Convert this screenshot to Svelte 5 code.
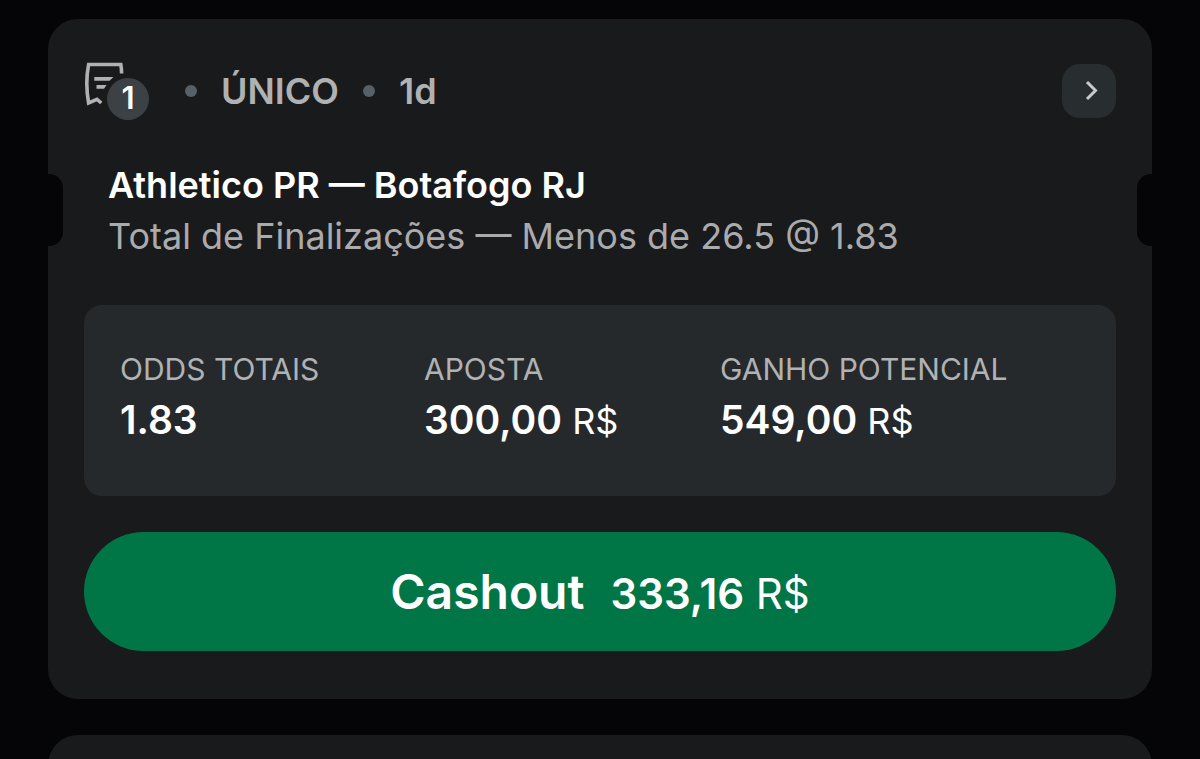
<script>
  const stats = [
    { label: 'ODDS TOTAIS', value: '1.83', currency: '' },
    { label: 'APOSTA', value: '300,00', currency: 'R$' },
    { label: 'GANHO POTENCIAL', value: '549,00', currency: 'R$' }
  ];
</script>

<main>
  <article class="card">
    <header>
      <div class="type">
        <svg width="42" height="48" viewBox="0 0 42 48" fill="none" stroke="#b0b1b3" stroke-width="3.6" aria-hidden="true">
          <path d="M37.600 12.500Q37.600 8 36.800 3.500H4.600Q1 22 4.600 42L13 38.300 17.300 42" />
          <path d="M10.300 16H29.500L25.500 19.700H10.300ZM12.500 24H22.500L20 27.700H12.500Z" fill="#b0b1b3" stroke="none" />
        </svg>
        <span class="count">1</span>
      </div>
      <i class="dot"></i>
      <span>ÚNICO</span>
      <i class="dot"></i>
      <span>1d</span>
      <button class="open" aria-label="Abrir aposta">
        <svg width="16" height="24" viewBox="0 0 16 24" fill="none" stroke="#c8cacc" stroke-width="3" aria-hidden="true">
          <path d="m6 3 8.500 8.500-8.500 8.500" />
        </svg>
      </button>
    </header>

    <section class="event">
      <h2>Athletico PR — Botafogo RJ</h2>
      <p>Total de Finalizações — Menos de 26.5 @ 1.83</p>
    </section>

    <dl>
      {#each stats as stat}
        <div>
          <dt>{stat.label}</dt>
          <dd><b>{stat.value}</b> {stat.currency}</dd>
        </div>
      {/each}
    </dl>

    <button class="cashout"><strong>Cashout</strong><span><b>333,16</b> R$</span></button>
  </article>
  <article class="card next"></article>
</main>

<style>
  :global(body) {
    margin: 0;
    background: #050507;
  }
  main {
    box-sizing: border-box;
    height: 100vh;
    overflow: hidden;
    padding: 19px 48px 0;
    font-family: Inter, sans-serif;
    color: #fff;
  }
  .card {
    position: relative;
    box-sizing: border-box;
    padding: 42px 36px 48px;
    border-radius: 30px;
    background: #191a1c;
  }
  .card:not(.next)::before,
  .card:not(.next)::after {
    content: '';
    position: absolute;
    top: 155px;
    width: 15px;
    height: 72px;
    background: #050507;
  }
  .card::before {
    left: 0;
    border-radius: 0 14px 14px 0;
  }
  .card::after {
    right: 0;
    border-radius: 14px 0 0 14px;
  }
  .next {
    margin-top: 36px;
    height: 100px;
  }
  header {
    display: flex;
    align-items: center;
    height: 60px;
    font-size: 36px;
    font-weight: 600;
    color: #b0b1b3;
  }
  .type {
    position: relative;
    width: 65px;
    height: 60px;
    margin-right: 36px;
  }
  .type svg {
    display: block;
  }
  .open svg {
    overflow: visible;
  }
  .count {
    position: absolute;
    right: 0;
    bottom: 1px;
    width: 42px;
    height: 42px;
    border-radius: 50%;
    background: #3b4145;
    color: #fff;
    font-size: 31px;
    line-height: 40px;
    text-align: center;
  }
  .dot {
    width: 12px;
    height: 12px;
    border-radius: 50%;
    background: #566068;
    margin-right: 24px;
  }
  header span + .dot {
    margin-left: 24px;
  }
  .open {
    display: grid;
    place-items: center;
    width: 54px;
    height: 54px;
    margin-left: auto;
    padding: 0;
    border: 0;
    border-radius: 18px;
    background: #282d30;
  }
  .event {
    padding: 39px 24px 0;
  }
  h2 {
    margin: 0;
    font-size: 36px;
    line-height: 50px;
    font-weight: 600;
  }
  p {
    margin: 0;
    font-size: 36px;
    line-height: 53px;
    color: #aaabad;
  }
  dl {
    box-sizing: border-box;
    display: grid;
    grid-template-columns: 304fr 296fr 360fr;
    margin: 42px 0 36px;
    padding: 42px 36px 46px;
    border-radius: 18px;
    background: #25292c;
  }
  dt {
    font-size: 30px;
    line-height: 44px;
    color: #b0b2b4;
  }
  dd {
    margin: 0;
    font-size: 36px;
    line-height: 57px;
  }
  dd b {
    font-size: 39px;
    font-weight: 600;
  }
  .cashout {
    display: flex;
    align-items: baseline;
    justify-content: center;
    gap: 26px;
    width: 100%;
    height: 119px;
    border: 0;
    border-radius: 60px;
    background: #007546;
    color: #fff;
    font-family: inherit;
    font-size: 42px;
    line-height: 119px;
    padding: 0;
  }
  .cashout b,
  .cashout strong {
    font-weight: 600;
  }
  .cashout strong {
    font-size: 48px;
  }
</style>
